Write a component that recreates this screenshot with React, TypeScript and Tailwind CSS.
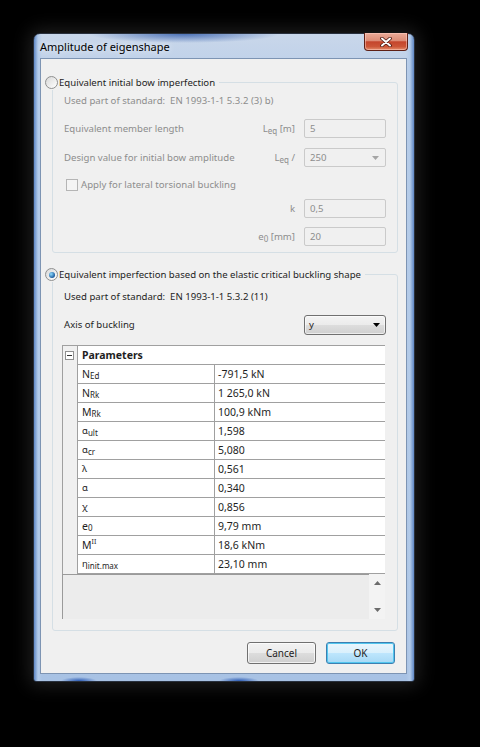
import React from "react";
import clsx from "clsx";

// Windows 7 style dialog: Amplitude of eigenshape

type Row = { label: React.ReactNode; value: string };

function Sub({ children }: { children: React.ReactNode }) {
  return <span className="relative top-[2px] text-[8px]">{children}</span>;
}

function Sup({ children }: { children: React.ReactNode }) {
  return <span className="relative top-[-4px] text-[7px]">{children}</span>;
}

function Greek({ children }: { children: React.ReactNode }) {
  return <span className="text-[9.5px]">{children}</span>;
}

const rows: Row[] = [
  { label: <>N<Sub>Ed</Sub></>, value: "-791,5 kN" },
  { label: <>N<Sub>Rk</Sub></>, value: "1 265,0 kN" },
  { label: <>M<Sub>Rk</Sub></>, value: "100,9 kNm" },
  { label: <><Greek>α</Greek><Sub>ult</Sub></>, value: "1,598" },
  { label: <><Greek>α</Greek><Sub>cr</Sub></>, value: "5,080" },
  { label: <Greek>λ</Greek>, value: "0,561" },
  { label: <Greek>α</Greek>, value: "0,340" },
  { label: <Greek>χ</Greek>, value: "0,856" },
  { label: <>e<Sub>0</Sub></>, value: "9,79 mm" },
  { label: <>M<Sup>II</Sup></>, value: "18,6 kNm" },
  { label: <><Greek>η</Greek><Sub>init.max</Sub></>, value: "23,10 mm" },
];

function Radio({ checked }: { checked?: boolean }) {
  return (
    <span className="flex h-[13px] w-[13px] shrink-0 items-center justify-center rounded-full border border-[#8e8f8f] bg-[linear-gradient(135deg,#d8d8d8,#ffffff)]">
      {checked && (
        <span className="h-[6px] w-[6px] rounded-full bg-[radial-gradient(circle_at_35%_35%,#8fdcff,#1d5c9e_70%)]" />
      )}
    </span>
  );
}

function GroupBox({
  legend,
  checked,
  className,
  children,
}: {
  legend: string;
  checked?: boolean;
  className?: string;
  children: React.ReactNode;
}) {
  return (
    <div className={clsx("relative ml-[11px] w-[346px] rounded-[3px] border border-[#d5dfe5]", className)}>
      <div className="absolute -left-[8px] -top-[8px] flex h-[15px] items-center gap-[1px] bg-[#f0f0f0] pr-[4px] text-[#1e1e1e]">
        <Radio checked={checked} />
        <span>{legend}</span>
      </div>
      {children}
    </div>
  );
}

function TextBox({ value }: { value: string }) {
  return (
    <div className="flex h-[19px] w-[82px] shrink-0 items-center rounded-[2px] border border-[#cacaca] bg-[#f0f0f0] pl-[5px] text-[#8d8d8d]">
      {value}
    </div>
  );
}

function Arrow({ color }: { color: string }) {
  return (
    <svg width="7" height="4" viewBox="0 0 7 4">
      <path d="M0 0h7L3.5 4z" fill={color} />
    </svg>
  );
}

export default function App() {
  return (
    <div className="h-[747px] w-full overflow-hidden bg-black pl-[33px] pt-[33px] font-['Noto_Sans','Liberation_Sans',sans-serif] text-[9.6px] leading-none">
      <div className="flex h-[649px] w-[382px] flex-col rounded-t-[7px] rounded-b-[3px] border border-[#28303d] bg-[radial-gradient(ellipse_95px_9px_at_150px_0px,rgba(35,80,165,0.75),transparent),radial-gradient(ellipse_18px_4px_at_45px_100%,rgba(30,80,175,0.9),transparent),radial-gradient(ellipse_20px_4px_at_205px_100%,rgba(30,80,175,0.9),transparent),linear-gradient(to_right,#5f88c6_0px,#b3cbe9_4px,transparent_8px,transparent_calc(100%-8px),#b3cbe9_calc(100%-4px),#5f88c6_100%),linear-gradient(to_bottom,#c9d7ea,#bccfe9_40px,#a8c2e4)] shadow-[0_0_18px_4px_rgba(60,60,60,0.5)]">
        {/* title bar */}
        <div className="flex h-[24px] shrink-0 items-start justify-between">
          <div className="flex h-[24px] items-center pl-[6px] text-[11px] text-black [text-shadow:0_0_6px_rgba(255,255,255,0.95)]">
            Amplitude of eigenshape
          </div>
          <div className="-mt-px mr-[6px] flex h-[18px] w-[44px] items-center justify-center rounded-b-[4px] border border-t-0 border-[#5e2016] bg-[linear-gradient(to_bottom,#ecab98_0%,#dc8c76_45%,#c4452c_52%,#cc5638_80%,#e48e6d_100%)] shadow-[inset_0_0_0_1px_rgba(255,210,200,0.5)]">
            <svg width="12" height="10" viewBox="0 0 12 10">
              <path d="M2 1.5l8 7M10 1.5l-8 7" stroke="#4a1710" strokeWidth="3.6" strokeLinecap="round" />
              <path d="M2 1.5l8 7M10 1.5l-8 7" stroke="#ffffff" strokeWidth="2" strokeLinecap="round" />
            </svg>
          </div>
        </div>

        {/* client area */}
        <div className="ml-[6px] mr-[7px] flex h-[616px] flex-col border border-[#7d94b3] bg-[#f0f0f0]">
          {/* group 1 */}
          <GroupBox legend="Equivalent initial bow imperfection" className="mt-[23px] h-[171px]">
            <div className="px-[11px] pb-[6px] text-[#8d8d8d]">
              <div className="mt-[8px] flex h-[20px] items-center">
                Used part of standard:&nbsp;&nbsp;EN 1993-1-1 5.3.2 (3) b)
              </div>
              <div className="mt-[8px] flex h-[19px] items-center">
                <span className="flex-1">Equivalent member length</span>
                <span className="mr-[9px]">
                  L<Sub>eq</Sub> [m]
                </span>
                <TextBox value="5" />
              </div>
              <div className="mt-[10px] flex h-[19px] items-center">
                <span className="flex-1">Design value for initial bow amplitude</span>
                <span className="mr-[9px]">
                  L<Sub>eq</Sub> /
                </span>
                <div className="flex h-[19px] w-[82px] shrink-0 items-center rounded-[2px] border border-[#cacaca] bg-[#f0f0f0] pl-[5px] pr-[6px]">
                  <span className="flex-1">250</span>
                  <Arrow color="#a5a5a5" />
                </div>
              </div>
              <div className="mt-[8px] flex h-[19px] items-center pl-[2px]">
                <span className="mr-[3px] h-[12px] w-[12px] border border-[#b5b5b5] bg-[#f4f4f4]" />
                Apply for lateral torsional buckling
              </div>
              <div className="mt-[5px] flex h-[19px] items-center justify-end">
                <span className="mr-[9px]">k</span>
                <TextBox value="0,5" />
              </div>
              <div className="mt-[9px] flex h-[19px] items-center justify-end">
                <span className="mr-[9px]">
                  e<Sub>0</Sub> [mm]
                </span>
                <TextBox value="20" />
              </div>
            </div>
          </GroupBox>

          {/* group 2 */}
          <GroupBox
            legend="Equivalent imperfection based on the elastic critical buckling shape"
            checked
            className="mt-[21px] h-[357px]"
          >
            <div className="text-[#1e1e1e]">
              <div className="ml-[11px] mt-[12px] flex h-[20px] items-center">
                Used part of standard:&nbsp;&nbsp;EN 1993-1-1 5.3.2 (11)
              </div>
              <div className="ml-[11px] mr-[11px] mt-[8px] flex h-[20px] items-center">
                <span className="flex-1">Axis of buckling</span>
                <div className="flex h-[20px] w-[82px] items-center rounded-[3px] border border-[#707070] bg-[linear-gradient(to_bottom,#f3f3f3,#ebebeb_50%,#dddddd_50%,#cfcfcf)] pl-[4px] pr-[5px] shadow-[inset_0_0_0_1px_rgba(255,255,255,0.6)]">
                  <span className="flex-1">y</span>
                  <Arrow color="#000000" />
                </div>
              </div>

              {/* property grid */}
              <div className="ml-[9px] mt-[10px] w-[323px] text-[10.5px]">
                <div className="flex border-t border-[#a0a0a0]">
                  <div className="w-[16px] shrink-0 border-l border-r border-[#a0a0a0] bg-[#f0f0f0] pl-[2px] pt-[5px]">
                    <div className="flex h-[9px] w-[9px] items-center justify-center border border-[#8f8f8f] bg-white">
                      <span className="h-px w-[5px] bg-[#333]" />
                    </div>
                  </div>
                  <div className="flex-1 bg-white">
                    <div className="flex h-[19px] items-center border-b border-[#a0a0a0] pl-[4px] font-bold">
                      Parameters
                    </div>
                    {rows.map((r, i) => (
                      <div key={i} className="flex h-[19px] border-b border-[#a0a0a0]">
                        <div className="flex w-[137px] items-center border-r border-[#a0a0a0] pl-[4px]">{r.label}</div>
                        <div className="flex flex-1 items-center pl-[3px]">{r.value}</div>
                      </div>
                    ))}
                  </div>
                </div>
                <div className="flex h-[45px]">
                  <div className="flex-1 border-l border-t border-[#9a9a9a] bg-[#ececec]" />
                  <div className="flex w-[16px] flex-col items-center justify-between bg-[#f3f3f3] py-[7px]">
                    <svg width="7" height="4" viewBox="0 0 7 4">
                      <path d="M0 4h7L3.5 0z" fill="#6b6b6b" />
                    </svg>
                    <Arrow color="#6b6b6b" />
                  </div>
                </div>
              </div>
            </div>
          </GroupBox>

          {/* buttons */}
          <div className="mt-[11px] flex justify-end gap-[10px] pr-[11px] text-[10px] text-[#1e1e1e]">
            <div className="flex h-[22px] w-[69px] items-center justify-center rounded-[3px] border border-[#707070] bg-[linear-gradient(to_bottom,#f2f2f2,#ebebeb_50%,#dddddd_50%,#cfcfcf)] shadow-[inset_0_0_0_1px_rgba(255,255,255,0.7)]">
              Cancel
            </div>
            <div className="flex h-[22px] w-[69px] items-center justify-center rounded-[3px] border border-[#3c7fb1] bg-[linear-gradient(to_bottom,#eaf6fd,#d9f0fc_50%,#bee6fd_50%,#a7d9f5)] shadow-[inset_0_0_0_1px_#52c6ee]">
              OK
            </div>
          </div>
        </div>
      </div>
    </div>
  );
}
